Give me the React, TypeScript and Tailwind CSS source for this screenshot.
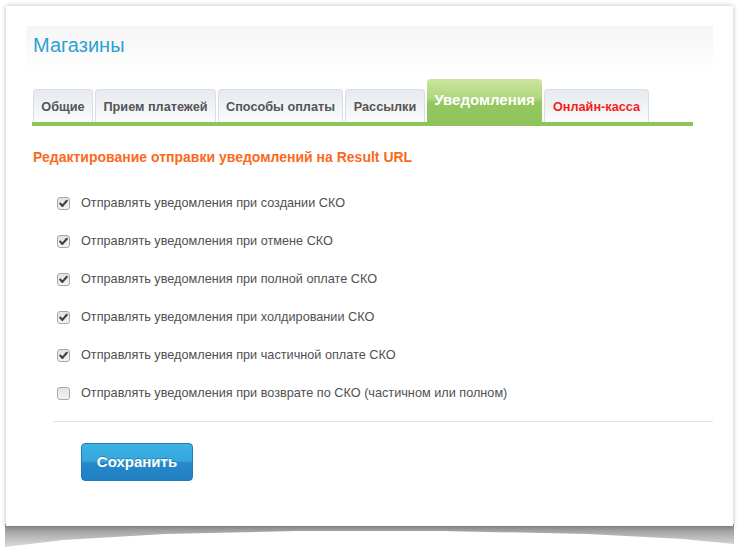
import React from "react";

const rows = [
  { label: "Отправлять уведомления при создании СКО", checked: true },
  { label: "Отправлять уведомления при отмене СКО", checked: true },
  { label: "Отправлять уведомления при полной оплате СКО", checked: true },
  { label: "Отправлять уведомления при холдировании СКО", checked: true },
  { label: "Отправлять уведомления при частичной оплате СКО", checked: true },
  { label: "Отправлять уведомления при возврате по СКО (частичном или полном)", checked: false },
];

function Box({ checked }: { checked: boolean }) {
  return (
    <span className="flex h-[13px] w-[13px] shrink-0 items-center justify-center rounded-[3px] border border-[#a9a9a9] bg-[linear-gradient(to_bottom,#e4e4e4,#f2f2f2)]">
      {checked && (
        <svg width="11" height="11" viewBox="0 0 11 11">
          <path d="M2.2 5.6 L4.4 7.9 L8.8 2.8" fill="none" stroke="#3f3f3f" strokeWidth="2.1" strokeLinecap="round" strokeLinejoin="round" />
        </svg>
      )}
    </span>
  );
}

function Tab({ label, w, red }: { label: string; w: string; red?: boolean }) {
  return (
    <div
      className={`${w} flex h-[33px] items-center justify-center rounded-t-[4px] border border-b-0 border-[#d9dee3] bg-[linear-gradient(to_bottom,#e6eaee,#fafbfc)] pt-[3px] text-[12.7px] font-bold ${
        red ? "text-[#f51d1d]" : "text-[#555555]"
      }`}
    >
      {label}
    </div>
  );
}

export default function App() {
  return (
    <div className="relative h-[556px] w-[747px] overflow-hidden bg-white font-['Liberation_Sans',Arial,sans-serif]">
      <div className="absolute left-[5px] top-[524px] h-[26px] w-[729px] bg-[linear-gradient(to_bottom,#8a8a8a,#b0b0b0_40%,#e6e6e6)] [clip-path:polygon(0_0,100%_0,100%_20px,93%_15px,80%_10px,60%_7px,40%_7px,22%_10px,8%_16px,0_23px)]" />
      <div className="relative ml-[6px] mt-[6px] h-[520px] w-[727px] bg-white px-[20px] pt-[20px] shadow-[0_0_5px_rgba(0,0,0,0.28)]">
        <div className="h-[44px] bg-[linear-gradient(to_bottom,#f5f5f5,#ffffff)] pl-[7px] pt-[8px] text-[20px] leading-[22px] text-[#2ea1d4]">
          Магазины
        </div>

        <div className="ml-[6px] mr-[20px] mt-[9px]">
          <div className="flex items-end gap-[2px] pl-[1px]">
            <Tab label="Общие" w="w-[60px]" />
            <Tab label="Прием платежей" w="w-[121px]" />
            <Tab label="Способы оплаты" w="w-[125px]" />
            <Tab label="Рассылки" w="w-[80px]" />
            <div className="flex h-[43px] w-[115px] justify-center rounded-t-[4px] bg-[linear-gradient(to_bottom,#cbe59d_0%,#afd680_45%,#95c761_55%,#8fc45b_100%)] pt-[12px] text-[15px] font-bold leading-[18px] text-white">
              Уведомления
            </div>
            <Tab label="Онлайн-касса" w="w-[105px]" red />
          </div>
          <div className="h-[4px] bg-[#8fc45b]" />
        </div>

        <div className="ml-[7px] mt-[23px] text-[14px] font-bold leading-[17px] text-[#fb6a1c]">
          Редактирование отправки уведомлений на Result URL
        </div>

        <div className="ml-[31px] mt-[18px] flex flex-col">
          {rows.map((r) => (
            <div key={r.label} className="flex h-[38px] items-center gap-[11px]">
              <Box checked={r.checked} />
              <span className="text-[12.7px] leading-[15px] text-[#505050]">{r.label}</span>
            </div>
          ))}
        </div>

        <div className="ml-[27px] mt-[9px] h-px bg-[#e2e2e2]" />

        <div className="ml-[55px] mt-[21px]">
          <button className="h-[38px] w-[112px] rounded-[4px] border border-[#1f7dbd] bg-[linear-gradient(to_bottom,#3db3e4_0%,#34a6dc_48%,#2689cb_52%,#1f7fc1_100%)] text-[15px] font-bold text-white [text-shadow:0_-1px_0_rgba(0,0,0,0.25)]">
            Сохранить
          </button>
        </div>
      </div>
    </div>
  );
}
